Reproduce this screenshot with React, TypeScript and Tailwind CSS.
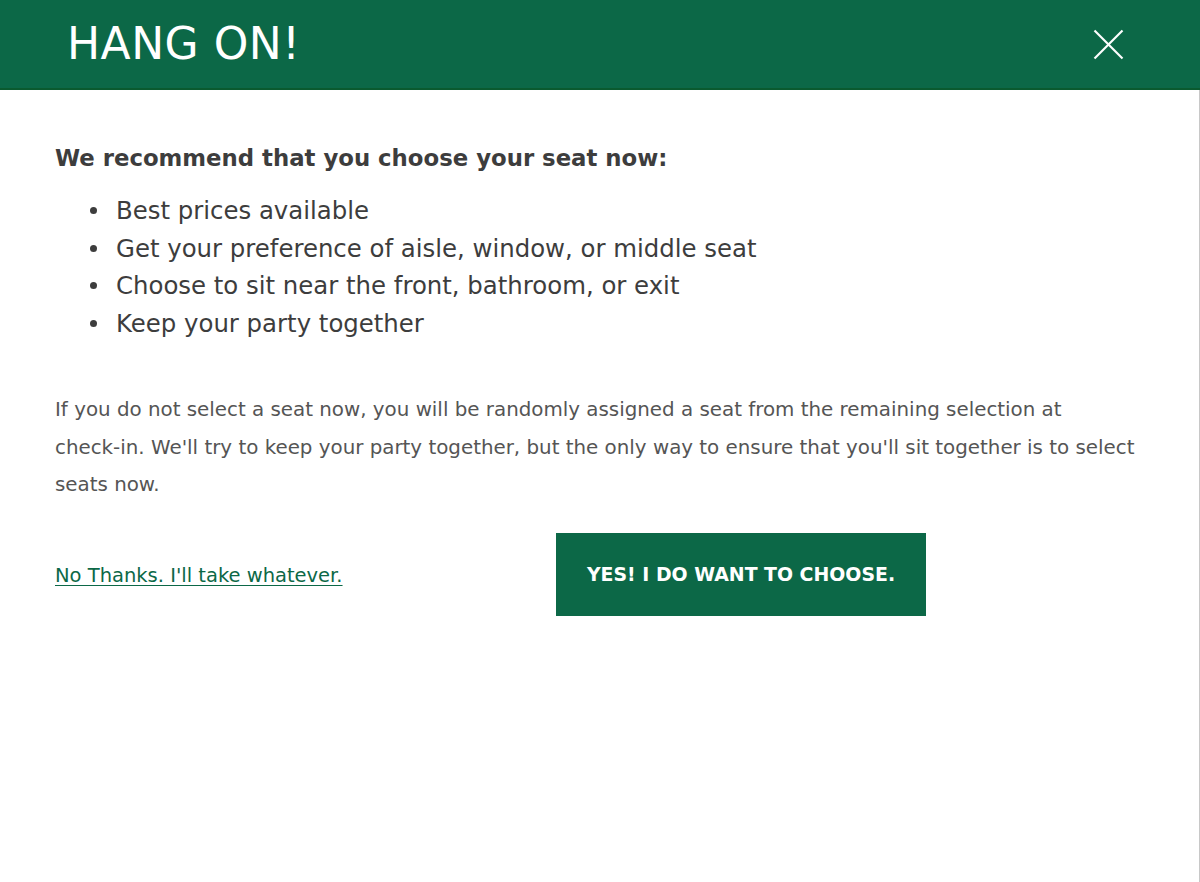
const reasons = [
  "Best prices available",
  "Get your preference of aisle, window, or middle seat",
  "Choose to sit near the front, bathroom, or exit",
  "Keep your party together",
];

export default function App() {
  return (
    <div
      className="flex min-h-[882px] w-[1200px] flex-col bg-white text-[#3d3d3d]"
      style={{ fontFamily: '"DejaVu Sans", "Open Sans", sans-serif' }}
    >
      <header className="flex h-[90px] items-center justify-between border-b-2 border-[#0a5a2f] bg-[#0c6847] pl-[67px] pr-[76px]">
        <h1 className="text-[44px] font-normal leading-none tracking-[0.5px] text-white">
          HANG ON!
        </h1>
        <button className="text-white">
          <svg width="31" height="31" viewBox="0 0 31 31" fill="none" stroke="currentColor" strokeWidth="2.2">
            <line x1="1.5" y1="1.5" x2="29.5" y2="29.5" />
            <line x1="29.5" y1="1.5" x2="1.5" y2="29.5" />
          </svg>
        </button>
      </header>

      <main className="flex-1 border-r border-[#c8c8c8] pl-[55px] pr-[40px] pt-[53px]">
        <h2 className="text-[22.8px] font-bold leading-[30px] text-[#3d3d3d]">
          We recommend that you choose your seat now:
        </h2>

        <ul className="mt-[19px] list-none pl-[35px]">
          {reasons.map((r) => (
            <li key={r} className="flex items-center text-[24.4px] leading-[37.5px]">
              <span className="mr-[19px] h-[7px] w-[7px] rounded-full bg-[#3d3d3d]" />
              {r}
            </li>
          ))}
        </ul>

        <p className="mt-[49px] whitespace-nowrap text-[19.85px] leading-[37.5px] text-[#555555]">
          If you do not select a seat now, you will be randomly assigned a seat from the remaining selection at
          <br />
          check-in. We'll try to keep your party together, but the only way to ensure that you'll sit together is to select
          <br />
          seats now.
        </p>

        <div className="mt-[29px] flex items-center">
          <a
            href="#"
            className="mt-[3px] w-[501px] text-[19.5px] text-[#0c6847] underline underline-offset-[3px]"
          >
            No Thanks. I'll take whatever.
          </a>
          <button className="h-[83px] w-[370px] bg-[#0c6847] text-[18.9px] font-bold text-white">
            YES! I DO WANT TO CHOOSE.
          </button>
        </div>
      </main>
    </div>
  );
}
